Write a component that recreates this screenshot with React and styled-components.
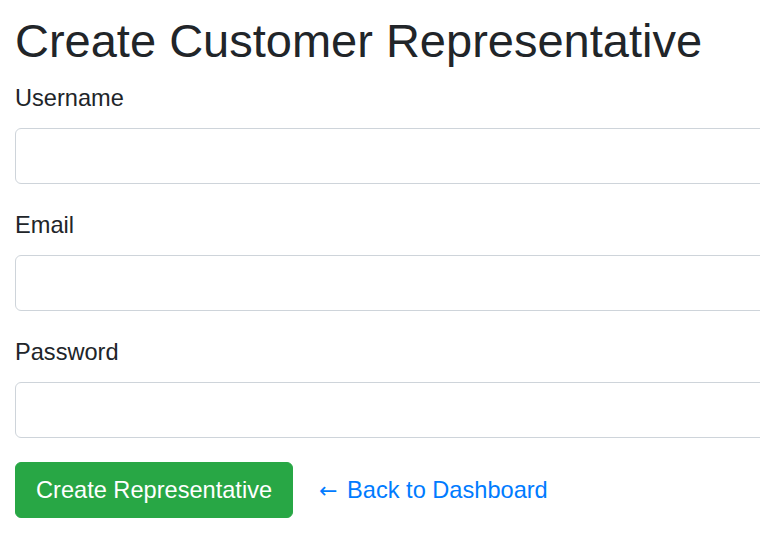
import React from "react";
import styled, { createGlobalStyle } from "styled-components";

const GlobalStyle = createGlobalStyle`
  html, body {
    margin: 0;
    padding: 0;
    background: #ffffff;
    overflow: hidden;
  }
  body {
    font-family: "Liberation Sans", Arial, sans-serif;
    color: #212529;
  }
  * { box-sizing: border-box; }
`;

const Container = styled.div`
  padding: 13px 0 0 15px;
  width: 900px;
`;

const Title = styled.h2`
  margin: 0 0 11.4px;
  font-size: 47px;
  font-weight: 500;
  line-height: 1.2;
  color: #212529;
`;

const Group = styled.div`
  margin-bottom: 24px;
`;

const Label = styled.label`
  display: block;
  margin-bottom: 11.8px;
  font-size: 23.6px;
  line-height: 1.5;
  color: #212529;
`;

const Input = styled.input`
  display: block;
  width: 100%;
  height: 56px;
  padding: 8.8px 17.6px;
  font-size: 23.6px;
  font-family: inherit;
  border: 1px solid #ced4da;
  border-radius: 6px;
  background: #fff;
  outline: none;
`;

const Actions = styled.div`
  display: flex;
  align-items: center;
  gap: 26px;
`;

const Button = styled.button`
  height: 56px;
  padding: 0 20px;
  font-family: inherit;
  font-size: 23.6px;
  line-height: 1.5;
  color: #fff;
  background: #28a745;
  border: 1px solid #28a745;
  border-radius: 6px;
  cursor: pointer;
`;

const Link = styled.a`
  font-size: 23.6px;
  line-height: 1.5;
  color: #007bff;
  text-decoration: none;
`;

const Arrow = styled.span`
  font-family: "DejaVu Sans", sans-serif;
  font-size: 22px;
  margin-right: 3px;
`;

export default function App() {
  return (
    <>
      <GlobalStyle />
      <Container>
        <Title>Create Customer Representative</Title>
        <form onSubmit={(e) => e.preventDefault()}>
          <Group>
            <Label htmlFor="username">Username</Label>
            <Input id="username" type="text" />
          </Group>
          <Group>
            <Label htmlFor="email">Email</Label>
            <Input id="email" type="email" />
          </Group>
          <Group>
            <Label htmlFor="password">Password</Label>
            <Input id="password" type="password" />
          </Group>
          <Actions>
            <Button type="submit">Create Representative</Button>
            <Link href="#"><Arrow>←</Arrow> Back to Dashboard</Link>
          </Actions>
        </form>
      </Container>
    </>
  );
}
